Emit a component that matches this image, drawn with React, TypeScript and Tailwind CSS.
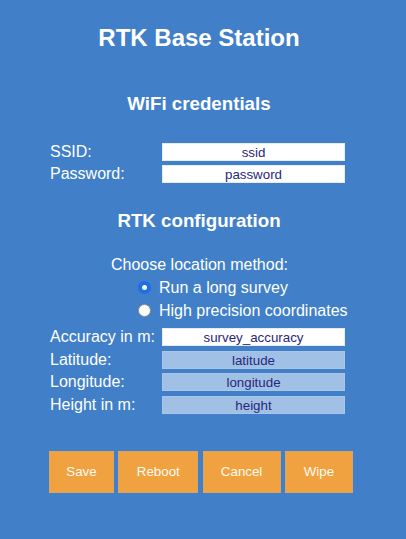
import React from "react";

type Field = {
  label: string;
  value: string;
  disabled?: boolean;
};

const wifiFields: Field[] = [
  { label: "SSID:", value: "ssid" },
  { label: "Password:", value: "password" },
];

const rtkFields: Field[] = [
  { label: "Accuracy in m:", value: "survey_accuracy" },
  { label: "Latitude:", value: "latitude", disabled: true },
  { label: "Longitude:", value: "longitude", disabled: true },
  { label: "Height in m:", value: "height", disabled: true },
];

function FieldRow({ label, value, disabled }: Field) {
  return (
    <div className="flex h-[18px] items-center">
      <label className="w-[112px] pl-[50px] box-content text-[16px] leading-[18px] whitespace-nowrap">
        {label}
      </label>
      <input
        type="text"
        readOnly
        value={value}
        disabled={disabled}
        className={
          "h-[18px] w-[183px] px-1 text-center text-[13.33px] leading-[16px] text-[#28287a] outline-none border " +
          (disabled
            ? "bg-[#a1c0e6] border-[#a9c6e9]"
            : "bg-white border-[#e6ecf4]")
        }
        style={{ fontFamily: "'Liberation Sans', Arial, sans-serif" }}
      />
    </div>
  );
}

function Radio({ checked, label }: { checked: boolean; label: string }) {
  return (
    <div className="flex h-[23px] items-center pl-[138px]">
      {checked ? (
        <span className="flex h-[13px] w-[13px] items-center justify-center rounded-full bg-[#1c6fe6]">
          <span className="h-[5px] w-[5px] rounded-full bg-white" />
        </span>
      ) : (
        <span className="h-[13px] w-[13px] rounded-full border border-[#8d8d8d] bg-white" />
      )}
      <span className="ml-[8px] text-[16px] leading-[18px] whitespace-nowrap">{label}</span>
    </div>
  );
}

const buttons = [
  { label: "Save", w: "w-[65px]" },
  { label: "Reboot", w: "w-[80px]" },
  { label: "Cancel", w: "w-[78px]" },
  { label: "Wipe", w: "w-[68px]" },
];

export default function App() {
  return (
    <div
      className="min-h-screen w-full bg-[#4180c8] text-white"
      style={{ fontFamily: "'Liberation Sans', Arial, sans-serif" }}
    >
      <div className="pt-[24px]">
        <h2 className="h-[28px] pr-[8px] text-center text-[24px] font-bold leading-[28px]">
          RTK Base Station
        </h2>

        <h3 className="mt-[40.5px] h-[22px] pr-[8px] text-center text-[18.72px] font-bold leading-[22px]">
          WiFi credentials
        </h3>

        <div className="mt-[28.5px] flex flex-col gap-[4px]">
          {wifiFields.map((f) => (
            <FieldRow key={f.label} {...f} />
          ))}
        </div>

        <h3 className="mt-[26.5px] h-[22px] pr-[8px] text-center text-[18.72px] font-bold leading-[22px]">
          RTK configuration
        </h3>

        <div className="mt-[21.5px]">
          <div className="h-[23px] pl-[111px] text-[16px] leading-[23px]">
            Choose location method:
          </div>
          <Radio checked label="Run a long survey" />
          <Radio checked={false} label="High precision coordinates" />
        </div>

        <div className="mt-[6px] flex flex-col">
          <FieldRow {...rtkFields[0]} />
          <div className="mt-[5px]">
            <FieldRow {...rtkFields[1]} />
          </div>
          <div className="mt-[4px]">
            <FieldRow {...rtkFields[2]} />
          </div>
          <div className="mt-[5px]">
            <FieldRow {...rtkFields[3]} />
          </div>
        </div>

        <div className="mt-[37px] flex gap-[4.3px] pl-[49px]">
          {buttons.map((b) => (
            <button
              key={b.label}
              type="button"
              className={`${b.w} h-[42px] border border-[#d9a562] bg-[#f1a240] text-[13.33px] text-[#fffaf2]`}
            >
              {b.label}
            </button>
          ))}
        </div>
      </div>
    </div>
  );
}
